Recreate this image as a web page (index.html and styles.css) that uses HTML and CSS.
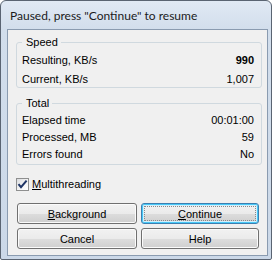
FILE: index.html
```html
<!DOCTYPE html>
<html>
<head>
<meta charset="utf-8">
<link rel="stylesheet" href="styles.css">
</head>
<body>
<div class="window">
  <div class="titlebar">Paused, press "Continue" to resume</div>
  <div class="client">
    <fieldset class="group group-speed">
      <legend>Speed</legend>
      <div class="row"><span>Resulting, KB/s</span><span class="val bold">990</span></div>
      <div class="row"><span>Current, KB/s</span><span class="val">1,007</span></div>
    </fieldset>
    <fieldset class="group group-total">
      <legend>Total</legend>
      <div class="row"><span>Elapsed time</span><span class="val">00:01:00</span></div>
      <div class="row"><span>Processed, MB</span><span class="val">59</span></div>
      <div class="row"><span>Errors found</span><span class="val">No</span></div>
    </fieldset>
    <label class="check">
      <span class="box"><svg width="11" height="11" viewBox="0 0 11 11"><path d="M1.5 5.2 L4 8.2 L9.6 1.6" fill="none" stroke="#1f3566" stroke-width="2"/></svg></span>
      <span class="check-label"><u>M</u>ultithreading</span>
    </label>
    <div class="buttons">
      <button class="btn"><u>B</u>ackground</button>
      <button class="btn btn-default"><u>C</u>ontinue</button>
      <button class="btn">Cancel</button>
      <button class="btn">Help</button>
    </div>
  </div>
</div>
</body>
</html>
```
FILE: styles.css
```css
html, body {
  margin: 0;
  padding: 0;
  background: #ffffff;
}
body {
  width: 276px;
  height: 264px;
  overflow: hidden;
}
.window {
  box-sizing: border-box;
  width: 272px;
  height: 260px;
  border: 1px solid #5a6472;
  border-radius: 6px 6px 2px 2px;
  background: linear-gradient(to bottom, #e0e9f4 0px, #d2deec 28px, #cbd8e8 100%);
  padding: 0 3px 3px 6px;
  display: flex;
  flex-direction: column;
}
.titlebar {
  height: 28px;
  box-sizing: border-box;
  padding: 1px 0 0 3px;
  display: flex;
  align-items: center;
  font-family: "Lato", "Liberation Sans", sans-serif;
  font-size: 12px;
  color: #1b1b1b;
  white-space: nowrap;
}
.client {
  flex: 1;
  box-sizing: border-box;
  border: 1px solid #8a9bb0;
  background: #f0f0f0;
  padding: 5px 5px 0 8px;
  font-family: "Liberation Sans", Arial, sans-serif;
  font-size: 11px;
  color: #000;
  display: flex;
  flex-direction: column;
}
.group {
  margin: 0;
  border: 1px solid #d0d9df;
  border-radius: 3px;
  padding: 5px 7px 1px 5px;
  display: flex;
  flex-direction: column;
  min-width: 0;
}
.group legend {
  padding: 0 3px 0 4px;
  line-height: 14px;
}
.group-speed {
  gap: 6px;
  padding-top: 5px;
  padding-bottom: 1px;
}
.group-total {
  margin-top: 8px;
  gap: 4px;
  padding-top: 4px;
  padding-bottom: 3px;
}
.row {
  display: flex;
  justify-content: space-between;
  line-height: 13px;
  height: 13px;
}
.bold {
  font-weight: bold;
}
.check {
  margin-top: 13px;
  display: flex;
  align-items: center;
  height: 13px;
  line-height: 13px;
  gap: 3px;
}
.box {
  box-sizing: border-box;
  width: 13px;
  height: 13px;
  border: 1px solid #8e8f8f;
  background: linear-gradient(135deg, #dadcdf 0%, #f6f6f6 60%, #ffffff 100%);
  display: flex;
  align-items: center;
  justify-content: center;
}
.box svg {
  display: block;
}
.buttons {
  margin-top: 12px;
  margin-left: 1px;
  display: grid;
  grid-template-columns: 120px 118px;
  grid-auto-rows: 21px;
  column-gap: 4px;
  row-gap: 4px;
}
.btn {
  box-sizing: border-box;
  margin: 0;
  padding: 0;
  height: 21px;
  font-family: "Liberation Sans", Arial, sans-serif;
  font-size: 11px;
  color: #000;
  border: 1px solid #707070;
  border-radius: 3px;
  background: linear-gradient(to bottom, #f2f2f2 0%, #ebebeb 50%, #dddddd 51%, #cfcfcf 100%);
  box-shadow: inset 0 0 0 1px #fbfbfb;
}
.btn-default {
  border-color: #3c7fb1;
  box-shadow: inset 0 0 0 1px #48c9f7, inset 0 0 0 2px #d4eefb;
  outline: 1px dotted #8a8a8a;
  outline-offset: -4px;
}
```
